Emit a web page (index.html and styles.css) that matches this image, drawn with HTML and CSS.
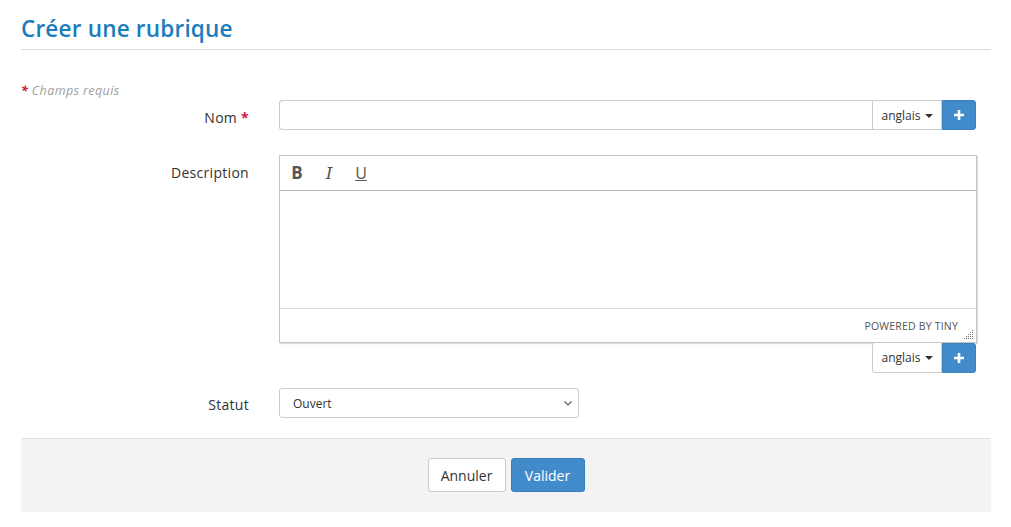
FILE: index.html
```html
<!DOCTYPE html>
<html lang="fr">
<head>
<meta charset="utf-8">
<title>Créer une rubrique</title>
<link rel="stylesheet" href="styles.css">
</head>
<body>
<div class="page">
  <h1 class="title">Créer une rubrique</h1>
  <p class="required-note"><span class="star">*</span> Champs requis</p>

  <div class="row row-nom">
    <label class="label">Nom <span class="star">*</span></label>
    <div class="field">
      <div class="input-group">
        <input class="text-input" type="text">
        <span class="lang">anglais <span class="caret"></span></span>
        <button class="plus" type="button"><svg width="12" height="12" viewBox="0 0 12 12"><path d="M6 1v10M1 6h10" stroke="#fff" stroke-width="2.6"/></svg></button>
      </div>
    </div>
  </div>

  <div class="row row-desc">
    <label class="label">Description</label>
    <div class="field">
      <div class="editor">
        <div class="toolbar">
          <span class="tb tb-b">B</span>
          <span class="tb tb-i">I</span>
          <span class="tb tb-u">U</span>
        </div>
        <div class="content"></div>
        <div class="statusbar">
          <span class="powered">POWERED BY TINY</span>
          <svg class="grip" width="10" height="10" viewBox="0 0 10 10" fill="#777">
            <rect x="8" y="0" width="1" height="1"/>
            <rect x="6" y="2" width="1" height="1"/><rect x="8" y="2" width="1" height="1"/>
            <rect x="4" y="4" width="1" height="1"/><rect x="6" y="4" width="1" height="1"/><rect x="8" y="4" width="1" height="1"/>
            <rect x="2" y="6" width="1" height="1"/><rect x="4" y="6" width="1" height="1"/><rect x="6" y="6" width="1" height="1"/><rect x="8" y="6" width="1" height="1"/>
            <rect x="0" y="8" width="1" height="1"/><rect x="2" y="8" width="1" height="1"/><rect x="4" y="8" width="1" height="1"/><rect x="6" y="8" width="1" height="1"/><rect x="8" y="8" width="1" height="1"/>
          </svg>
        </div>
      </div>
      <div class="input-group addon-only">
        <span class="lang lang-left">anglais <span class="caret"></span></span>
        <button class="plus" type="button"><svg width="12" height="12" viewBox="0 0 12 12"><path d="M6 1v10M1 6h10" stroke="#fff" stroke-width="2.6"/></svg></button>
      </div>
    </div>
  </div>

  <div class="row row-statut">
    <label class="label">Statut</label>
    <div class="field">
      <div class="select-wrap">
        <select class="select"><option>Ouvert</option></select>
        <svg class="chev" width="8" height="5" viewBox="0 0 8 5"><path d="M0.5 0.5L4 4L7.5 0.5" fill="none" stroke="#555" stroke-width="1.1"/></svg>
      </div>
    </div>
  </div>

  <div class="footer">
    <button class="btn btn-default" type="button">Annuler</button>
    <button class="btn btn-primary" type="button">Valider</button>
  </div>
</div>
</body>
</html>
```

FILE: styles.css
```css
* { box-sizing: border-box; }
html, body { margin: 0; padding: 0; background: #fff; }
body {
  font-family: "Open Sans", "DejaVu Sans", sans-serif;
  font-size: 14px;
  color: #333;
}
.page { padding: 0 20px 0 21px; }

.title {
  margin: 0;
  padding-top: 14px;
  height: 50px;
  font-size: 22.5px;
  font-weight: 600;
  letter-spacing: 0.2px;
  color: #1b7dbb;
  line-height: 30px;
  border-bottom: 1px solid #cfdde5;
}

.required-note {
  margin: 0;
  padding-top: 33px;
  height: 50px;
  font-size: 12.5px;
  letter-spacing: 0.4px;
  font-style: italic;
  color: #a0a0a0;
  line-height: 16px;
}
.star { color: #d9153f; font-style: normal; font-weight: 700; }
.required-note .star { font-style: italic; }

.row {
  display: grid;
  grid-template-columns: 228px 1fr;
  column-gap: 30px;
}
.label {
  text-align: right;
  font-size: 14px;
  letter-spacing: 0.3px;
  color: #333;
  line-height: 20px;
  padding-top: 8px;
}
.field { width: 697px; }

.row-nom { height: 55px; }
.row-desc { margin-bottom: 15px; }
.row-desc .label { padding-top: 8px; }
.row-statut { height: 50px; }
.row-statut .label { padding-top: 7px; }

.input-group { display: flex; height: 30px; }
.text-input {
  flex: 1;
  height: 30px;
  border: 1px solid #ccc;
  border-right: 0;
  border-radius: 3px 0 0 3px;
  padding: 4px 10px;
  font: inherit;
}
.lang {
  width: 70px;
  display: flex;
  align-items: center;
  justify-content: center;
  gap: 4px;
  border: 1px solid #ccc;
  background: #fff;
  font-size: 12px;
  color: #333;
}
.caret {
  width: 0; height: 0;
  border-left: 4px solid transparent;
  border-right: 4px solid transparent;
  border-top: 4px solid #333;
  margin-top: 1px;
}
.plus {
  width: 34px;
  height: 30px;
  border: 1px solid #3b80c0;
  background: #428bca;
  border-radius: 0 3px 3px 0;
  padding: 0;
  display: flex;
  align-items: center;
  justify-content: center;
  margin: 0;
}
.addon-only { justify-content: flex-end; }
.lang-left { border-radius: 3px 0 0 3px; border-top: 0; height: 30px; }

.editor {
  border: 1px solid #c4c4c4;
  box-shadow: 1px 1px 1px rgba(0,0,0,0.12);
  width: 698px;
  height: 188px;
  display: flex;
  flex-direction: column;
}
.toolbar {
  height: 35px;
  border-bottom: 1px solid #b8b8b8;
  display: flex;
  align-items: center;
  padding-left: 10px;
  gap: 0;
}
.tb {
  width: 32px;
  text-align: center;
  font-size: 17px;
  color: #555;
  line-height: 20px;
}
.tb-b { font-weight: 700; font-family: "Open Sans", sans-serif; width: 14px; margin-right: 18px; }
.tb-i { font-style: italic; font-family: "DejaVu Serif", serif; width: 14px; margin-right: 18px; font-size: 17px; }
.tb-u { text-decoration: underline; width: 14px; font-size: 16px; }
.content { flex: 1; }
.statusbar {
  height: 34px;
  border-top: 1px solid #ddd;
  display: flex;
  align-items: center;
  justify-content: flex-end;
  padding-right: 18px;
  position: relative;
}
.powered { font-size: 10.5px; color: #555; letter-spacing: 0.2px; }
.grip { position: absolute; right: 2px; bottom: 2px; }

.select-wrap { position: relative; width: 300px; }
.select {
  width: 300px;
  height: 30px;
  border: 1px solid #ccc;
  border-radius: 3px;
  background: #fff;
  padding: 0 13px;
  font: inherit;
  font-size: 12px;
  color: #333;
  appearance: none;
  -webkit-appearance: none;
}
.chev { position: absolute; right: 7px; top: 13px; pointer-events: none; }

.footer {
  margin-top: 0;
  height: 74px;
  background: #f3f3f3;
  border-top: 1px solid #e2e2e2;
  display: flex;
  justify-content: center;
  align-items: flex-start;
  gap: 5px;
  padding-top: 19px;
}
.btn {
  height: 34px;
  border-radius: 3px;
  font: inherit;
  font-size: 14px;
  padding: 0 12px;
}
.btn-default { background: #fff; border: 1px solid #ccc; color: #333; width: 78px; }
.btn-primary { background: #428bca; border: 1px solid #3a7dbb; color: #fff; width: 74px; }
```
